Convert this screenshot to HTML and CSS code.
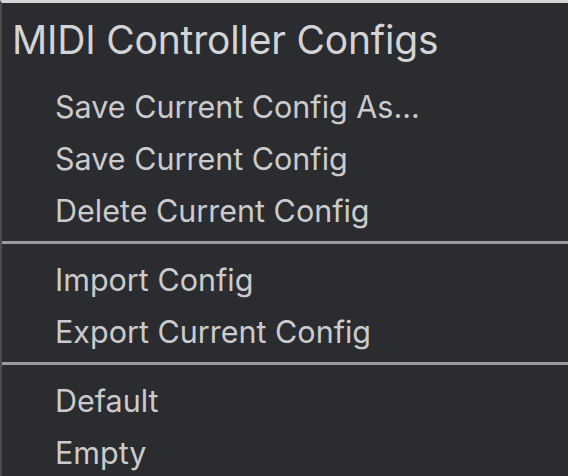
FILE: index.html
```html
<!DOCTYPE html>
<html>
<head>
<meta charset="utf-8">
<link rel="stylesheet" href="styles.css">
</head>
<body>
<div class="menu">
  <div class="title">MIDI Controller Configs</div>
  <div class="group">
    <div class="item">Save Current Config As...</div>
    <div class="item">Save Current Config</div>
    <div class="item">Delete Current Config</div>
  </div>
  <div class="sep"></div>
  <div class="group">
    <div class="item">Import Config</div>
    <div class="item">Export Current Config</div>
  </div>
  <div class="sep"></div>
  <div class="group">
    <div class="item">Default</div>
    <div class="item">Empty</div>
  </div>
</div>
</body>
</html>
```
FILE: styles.css
```css
html, body {
  margin: 0;
  padding: 0;
  background: #2a2c2f;
}
body {
  width: 568px;
  height: 476px;
  overflow: hidden;
  font-family: Inter, "Liberation Sans", sans-serif;
}
.menu {
  height: 476px;
  box-sizing: border-box;
  border-top: 3px solid #d6d6d6;
  border-left: 2px solid #4a4c4f;
  background: #2a2c2f;
}
.title {
  color: #d4d4d6;
  font-size: 39px;
  line-height: 74px;
  padding-left: 10px;
  margin-bottom: 4px;
  letter-spacing: -0.2px;
}
.item {
  color: #cbcbcd;
  font-size: 30.5px;
  line-height: 52px;
  padding-left: 53px;
}
.sep {
  height: 3px;
  background: #9a9b9d;
  margin: 4px 0 10px;
}
```
